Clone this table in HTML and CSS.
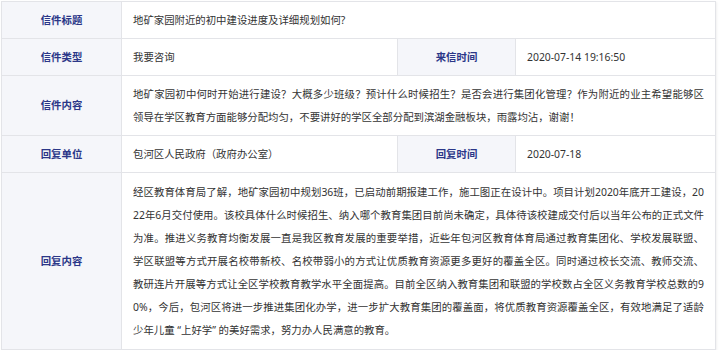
FILE: index.html
```html
<!DOCTYPE html>
<html lang="zh-CN">
<head>
<meta charset="utf-8">
<title>信件详情</title>
<link rel="stylesheet" href="styles.css">
</head>
<body>
<div class="page">
  <div class="letter">
    <div class="cell label">信件标题</div>
    <div class="cell value span3">地矿家园附近的初中建设进度及详细规划如何?</div>

    <div class="cell label">信件类型</div>
    <div class="cell value">我要咨询</div>
    <div class="cell label">来信时间</div>
    <div class="cell value">2020-07-14 19:16:50</div>

    <div class="cell label">信件内容</div>
    <div class="cell value span3 text">地矿家园初中何时开始进行建设？大概多少班级？预计什么时候招生？是否会进行集团化管理？作为附近的业主希望能够区领导在学区教育方面能够分配均匀，不要讲好的学区全部分配到滨湖金融板块，雨露均沾，谢谢！</div>

    <div class="cell label">回复单位</div>
    <div class="cell value">包河区人民政府（政府办公室）</div>
    <div class="cell label">回复时间</div>
    <div class="cell value">2020-07-18</div>

    <div class="cell label tall">回复内容</div>
    <div class="cell value span3 text tall">经区教育体育局了解，地矿家园初中规划36班，已启动前期报建工作，施工图正在设计中。项目计划2020年底开工建设，2022年6月交付使用。该校具体什么时候招生、纳入哪个教育集团目前尚未确定，具体待该校建成交付后以当年公布的正式文件为准。推进义务教育均衡发展一直是我区教育发展的重要举措，近些年包河区教育体育局通过教育集团化、学校发展联盟、学区联盟等方式开展名校带新校、名校带弱小的方式让优质教育资源更多更好的覆盖全区。同时通过校长交流、教师交流、教研连片开展等方式让全区学校教育教学水平全面提高。目前全区纳入教育集团和联盟的学校数占全区义务教育学校总数的90%，今后，包河区将进一步推进集团化办学，进一步扩大教育集团的覆盖面，将优质教育资源覆盖全区，有效地满足了适龄少年儿童 “上好学” 的美好需求，努力办人民满意的教育。</div>
  </div>
</div>
</body>
</html>
```

FILE: styles.css
```css
html, body {
  margin: 0;
  padding: 0;
  background: #ffffff;
}

.page {
  padding: 1px 0 0 1px;
}

.letter {
  width: 715px;
  box-sizing: border-box;
  display: grid;
  grid-template-columns: 120px 276px 118px 200px;
  border-top: 1px solid #e3e4e8;
  border-left: 1px solid #e3e4e8;
  box-shadow: 1px 1px 2px rgba(0, 0, 0, 0.06);
  font-family: "Noto Sans", "Noto Sans CJK SC", sans-serif;
  font-size: 10.4px;
  line-height: 23px;
  color: #333333;
}

.cell {
  border-right: 1px solid #e3e4e8;
  border-bottom: 1px solid #e3e4e8;
  padding: 6.5px 12px 6.5px 11px;
  display: flex;
  align-items: center;
}

.label {
  justify-content: center;
  padding-left: 0;
  padding-right: 0;
  background: #f5f6fa;
  color: #2b3788;
  font-weight: 700;
}

.value {
  word-break: break-all;
}

.span3 {
  grid-column: 2 / 5;
}

.text {
  display: block;
  text-align: justify;
  padding-right: 11px;
}

.tall {
  padding-top: 7.5px;
  padding-bottom: 7.5px;
}

.label.tall {
  padding-left: 0;
  padding-right: 0;
}
```
